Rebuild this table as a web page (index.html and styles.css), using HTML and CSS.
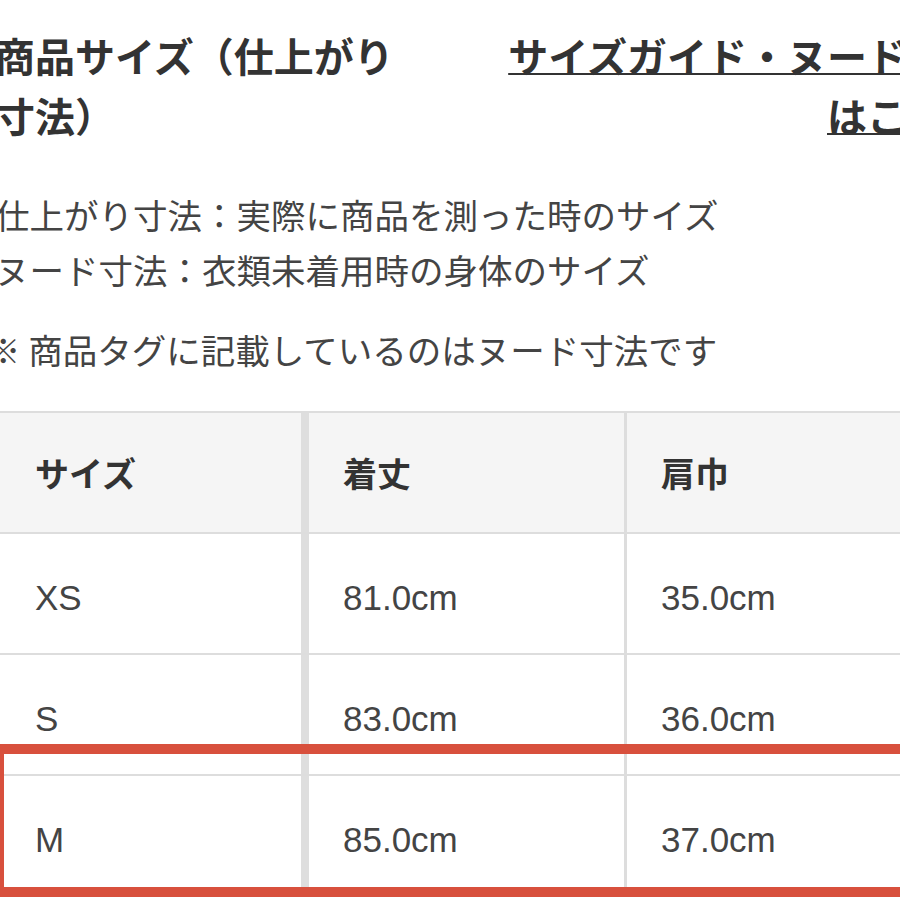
FILE: index.html
```html
<!DOCTYPE html>
<html lang="ja">
<head>
<meta charset="utf-8">
<title>商品サイズ</title>
<link rel="stylesheet" href="styles.css">
</head>
<body>
<div class="page">
  <div class="head">
    <h1 class="title">商品サイズ（仕上がり寸法）</h1>
    <a class="guide" href="#">サイズガイド・ヌード寸法はこちら</a>
  </div>
  <p class="desc">仕上がり寸法：実際に商品を測った時のサイズ<br>ヌード寸法：衣類未着用時の身体のサイズ</p>
  <p class="note">※ 商品タグに記載しているのはヌード寸法です</p>
</div>
<div class="table">
  <div class="row row-head">
    <div class="cell c1">サイズ</div>
    <div class="cell c2">着丈</div>
    <div class="cell c3">肩巾</div>
  </div>
  <div class="row">
    <div class="cell c1">XS</div>
    <div class="cell c2">81.0cm</div>
    <div class="cell c3">35.0cm</div>
  </div>
  <div class="row">
    <div class="cell c1">S</div>
    <div class="cell c2">83.0cm</div>
    <div class="cell c3">36.0cm</div>
  </div>
  <div class="row">
    <div class="cell c1">M</div>
    <div class="cell c2">85.0cm</div>
    <div class="cell c3">37.0cm</div>
  </div>
  <div class="highlight"></div>
</div>
</body>
</html>
```
FILE: styles.css
```css
html, body {
  margin: 0;
  padding: 0;
  background: #ffffff;
  overflow: hidden;
}

body {
  font-family: "Noto Sans CJK JP", "Noto Sans", sans-serif;
  color: #444444;
}

.page {
  margin-left: -5px;
  width: 992px;
}

.head {
  display: flex;
  justify-content: space-between;
  align-items: flex-start;
  padding-top: 25px;
}

.title {
  width: 410px;
  margin: 0;
  font-size: 40px;
  line-height: 60px;
  font-weight: 700;
  color: #333333;
}

.guide {
  display: block;
  width: 490px;
  text-align: right;
  font-size: 40px;
  line-height: 60px;
  font-weight: 700;
  color: #333333;
  text-decoration: underline;
  text-decoration-thickness: 2px;
  text-underline-offset: 1px;
}

.desc {
  margin: 42px 0 0;
  font-size: 34.5px;
  line-height: 55px;
}

.note {
  margin: 25px 0 0 -9px;
  font-size: 34.5px;
  line-height: 55px;
}

.table {
  position: relative;
  width: 1000px;
  margin-top: 34px;
  border-top: 2px solid #dddddd;
}

.row {
  display: flex;
  border-bottom: 2px solid #dddddd;
}

.cell {
  box-sizing: border-box;
  height: 119px;
  display: flex;
  align-items: center;
  padding-left: 34px;
  padding-top: 9px;
  font-family: "Liberation Sans", Arial, sans-serif;
  font-size: 35px;
  color: #444444;
}

.c1 {
  width: 309px;
  padding-left: 35px;
  border-right: 8px solid #dedede;
}

.c2 {
  width: 318px;
  border-right: 3px solid #dddddd;
}

.c3 {
  flex: 1;
}

.row-head .cell {
  background: #f5f5f5;
  padding-top: 0;
  font-family: "Noto Sans CJK JP", sans-serif;
  font-size: 34px;
  font-weight: 700;
  color: #333333;
}

.highlight {
  position: absolute;
  top: 331px;
  left: -6px;
  width: 1000px;
  height: 170px;
  box-sizing: border-box;
  border: 10px solid #d8503d;
  border-bottom-width: 27px;
}
```
